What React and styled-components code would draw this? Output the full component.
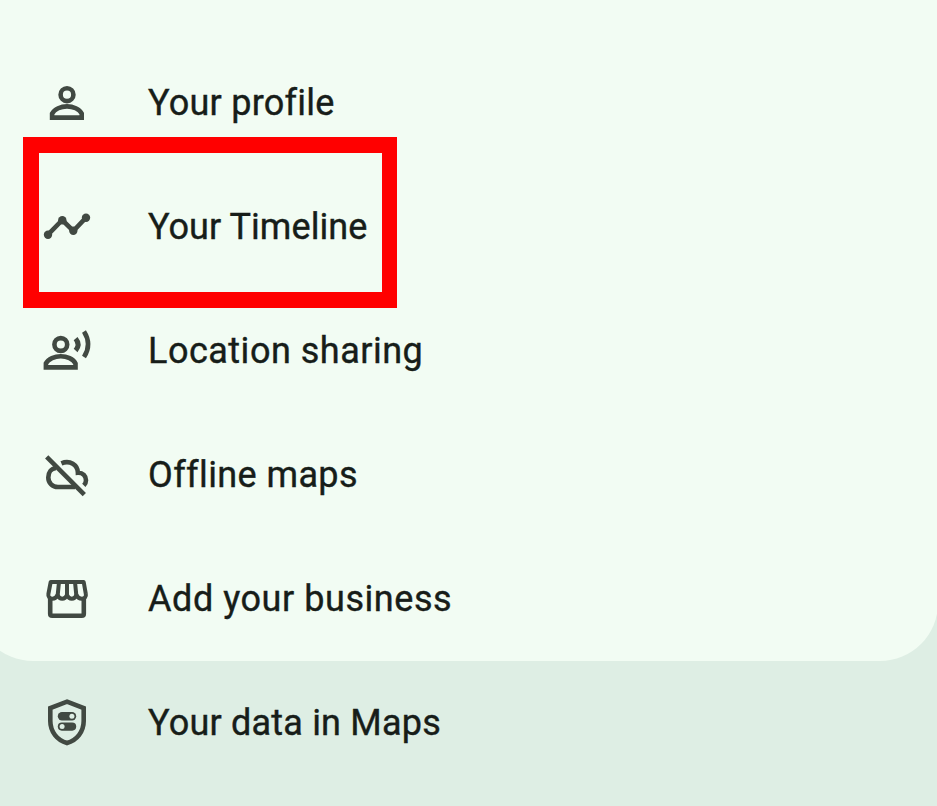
import React from "react";
import styled, { createGlobalStyle } from "styled-components";

const GlobalStyle = createGlobalStyle`
  * { box-sizing: border-box; }
  body { margin: 0; background: #deeee4; }
`;

const Screen = styled.main`
  position: relative;
  width: 937px;
  height: 806px;
  overflow: hidden;
  background: #deeee4;
  font-family: Roboto, Inter, sans-serif;
`;

const Sheet = styled.section`
  height: 661px;
  margin: 0 -1px 0 -25px;
  padding: 41px 0 0 25px;
  border-radius: 0 0 58px 58px;
  background: #f2fcf3;
`;

const Row = styled.div`
  display: flex;
  align-items: center;
  gap: 51px;
  height: 124px;
  padding-left: 37px;
`;

const Icon = styled.svg`
  flex: none;
  width: 60px;
  height: 60px;
  overflow: visible;
  fill: none;
  stroke: #414942;
  stroke-width: 4.6px;
`;

const Label = styled.span`
  font-size: 36px;
  line-height: 44px;
  letter-spacing: ${(p) => p.$tracking}px;
  white-space: nowrap;
  color: #171d19;
  -webkit-text-stroke: 0.4px #171d19;
`;

const Highlight = styled.div`
  position: absolute;
  left: 23px;
  top: 137px;
  width: 374px;
  height: 171px;
  border: 16px solid #ff0000;
  border-right-width: 15px;
`;

const Person = () => (
  <>
    <circle cx="0" cy="-8.3" r="6.4" />
    <path d="M-14.9 14.6V10.6C-12.5 6 -6 3.4 0 3.4S12.5 6 14.7 10.6V14.6Z" />
  </>
);

const icons = {
  profile: <Person />,
  timeline: (
    <>
      <path d="M-19 7.7L-4.7 -7L6.3 4L19 -9.3" />
      <g fill="#414942" stroke="none">
        <circle cx="-19" cy="7.7" r="4.2" />
        <circle cx="-4.7" cy="-6.8" r="4.2" />
        <circle cx="6.3" cy="3.8" r="4.2" />
        <circle cx="19" cy="-9.3" r="4.2" />
      </g>
    </>
  ),
  sharing: (
    <>
      <g transform="translate(-6.2 1.8)">
        <Person />
      </g>
      <path d="M8.6 -12.3Q13.6 -6.3 8.6 -.5" strokeWidth="5" />
      <path d="M17 -19.6Q25.2 -6.7 17 6" />
    </>
  ),
  offline: (
    <>
      <path d="M-20.3 -18.2L17.3 19.6" />
      <path d="M-11 -7C-16 -6.5 -18.7 -2.2 -18.7 2.4C-18.7 8 -14.5 12 -9 12H8" />
      <path d="M-5.6 -11.6C3 -15.2 10.7 -10 10.9 -2.2C16 -2.4 19 1.2 19 5.2C19 7.4 18.2 9 16.8 10.4" />
    </>
  ),
  store: (
    <>
      <path d="M-16.8 0V14.8Q-16.8 16.8 -14.8 16.8H14.8Q16.8 16.8 16.8 14.8V0" />
      <path
        strokeLinejoin="round"
        strokeWidth="4"
        d="M-16.3 -17H16.7L18.8 -5.2C19.5 -2 17.5 -.3 14.8 -.3Q11 -.3 9.5 -4Q8 -.3 4.8 -.3Q1.5 -.3 0 -4Q-1.5 -.3 -4.8 -.3Q-8 -.3 -9.5 -4Q-11 -.3 -14.6 -.3C-17.2 -.3 -19.2 -2 -18.6 -5.2Z"
      />
      <path d="M-8 -17L-9.4 -3M0 -17V-3M8 -17L9.4 -3" strokeWidth="4" />
    </>
  ),
  shield: (
    <>
      <path d="M0 -21.3L16.7 -15V-2C16.7 8.8 9.7 17.3 0 20C-9.7 17.3 -16.7 8.8 -16.7 -2V-15Z" />
      <g stroke="none">
        <rect x="-9.2" y="-11" width="18.4" height="8.4" rx="4.2" fill="#414942" />
        <rect x="-9.2" y="-.5" width="18.4" height="8.2" rx="4.1" fill="#414942" />
        <circle cx="4.9" cy="-6.8" r="2.5" fill="#deeee4" />
        <circle cx="-4.9" cy="3.6" r="2.5" fill="#deeee4" />
      </g>
    </>
  ),
};

const MenuItem = ({ icon, label, tracking }) => (
  <Row>
    <Icon viewBox="-30 -30 60 60" aria-hidden="true">
      {icons[icon]}
    </Icon>
    <Label $tracking={tracking}>{label}</Label>
  </Row>
);

export default function App() {
  return (
    <>
      <GlobalStyle />
      <Screen>
        <Sheet>
          <MenuItem icon="profile" label="Your profile" tracking={0.25} />
          <MenuItem icon="timeline" label="Your Timeline" tracking={0.05} />
          <MenuItem icon="sharing" label="Location sharing" tracking={0.5} />
          <MenuItem icon="offline" label="Offline maps" tracking={0.4} />
          <MenuItem icon="store" label="Add your business" tracking={0.55} />
        </Sheet>
        <MenuItem icon="shield" label="Your data in Maps" tracking={0.2} />
        <Highlight />
      </Screen>
    </>
  );
}
